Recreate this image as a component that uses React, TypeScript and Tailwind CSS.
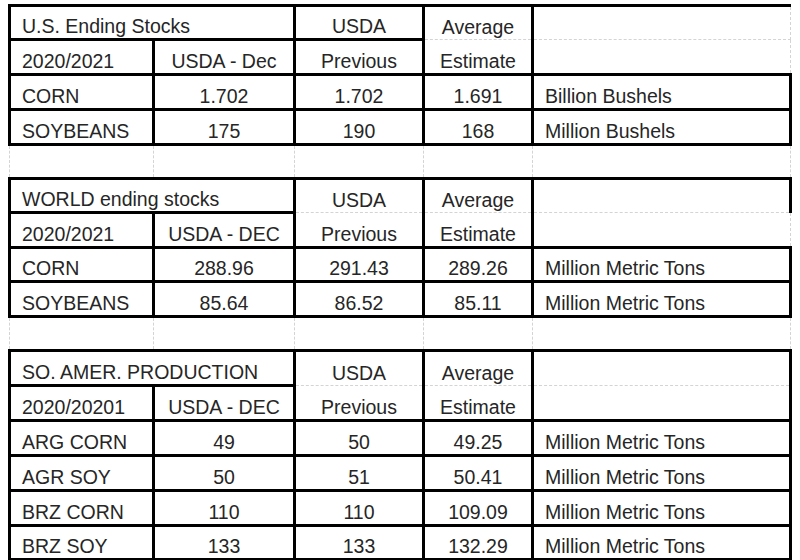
import React from 'react';

// thick black rule on one side of a cell; everything else stays a dashed sheet gridline
const SIDE: Record<string, string> = {
  t: 'border-t-[3px] border-t-black [border-top-style:solid]!',
  r: 'border-r-[3px] border-r-black [border-right-style:solid]!',
  b: 'border-b-[3px] border-b-black [border-bottom-style:solid]!',
  l: 'border-l-[3px] border-l-black [border-left-style:solid]!',
};

type Cell = { text?: string; span?: number; left?: boolean; sides?: string };
type Row = { h: string; cells: Cell[] };

const gap = (h: string): Row => ({ h, cells: [{}, {}, {}, {}, {}] });

const dataRow = (h: string, label: string, a: string, b: string, c: string, unit: string): Row => ({
  h,
  cells: [
    { text: label, left: true, sides: 'lrb' },
    { text: a, sides: 'rb' },
    { text: b, sides: 'rb' },
    { text: c, sides: 'rb' },
    { text: unit, left: true, sides: 'rb' },
  ],
});

const rows: Row[] = [
  {
    h: 'h-[34px]',
    cells: [
      { text: 'U.S. Ending Stocks', span: 2, left: true, sides: 'tlb' },
      { text: 'USDA', sides: 'tlrb' },
      { text: 'Average', sides: 'tr' },
      { sides: 't' },
    ],
  },
  {
    h: 'h-[35px]',
    cells: [
      { text: '2020/2021', left: true, sides: 'lrb' },
      { text: 'USDA - Dec', sides: 'rb' },
      { text: 'Previous', sides: 'rb' },
      { text: 'Estimate', sides: 'rb' },
      { sides: 'b' },
    ],
  },
  dataRow('h-[35px]', 'CORN', '1.702', '1.702', '1.691', 'Billion Bushels'),
  dataRow('h-[35px]', 'SOYBEANS', '175', '190', '168', 'Million Bushels'),
  gap('h-[34px]'),
  {
    h: 'h-[34px]',
    cells: [
      { text: 'WORLD ending stocks', span: 2, left: true, sides: 'tlb' },
      { text: 'USDA', sides: 'tlr' },
      { text: 'Average', sides: 'tr' },
      { sides: 'tr' },
    ],
  },
  {
    h: 'h-[35px]',
    cells: [
      { text: '2020/2021', left: true, sides: 'lrb' },
      { text: 'USDA - DEC', sides: 'rb' },
      { text: 'Previous', sides: 'rb' },
      { text: 'Estimate', sides: 'rb' },
      { sides: 'b' },
    ],
  },
  dataRow('h-[34px]', 'CORN', '288.96', '291.43', '289.26', 'Million Metric Tons'),
  dataRow('h-[35px]', 'SOYBEANS', '85.64', '86.52', '85.11', 'Million Metric Tons'),
  gap('h-[34px]'),
  {
    h: 'h-[35px]',
    cells: [
      { text: 'SO. AMER. PRODUCTION', span: 2, left: true, sides: 'tlb' },
      { text: 'USDA', sides: 'tlr' },
      { text: 'Average', sides: 'tr' },
      { sides: 'tr' },
    ],
  },
  {
    h: 'h-[35px]',
    cells: [
      { text: '2020/20201', left: true, sides: 'lrb' },
      { text: 'USDA - DEC', sides: 'rb' },
      { text: 'Previous', sides: 'rb' },
      { text: 'Estimate', sides: 'rb' },
      { sides: 'rb' },
    ],
  },
  dataRow('h-[35px]', 'ARG CORN', '49', '50', '49.25', 'Million Metric Tons'),
  dataRow('h-[35px]', 'AGR SOY', '50', '51', '50.41', 'Million Metric Tons'),
  dataRow('h-[35px]', 'BRZ CORN', '110', '110', '109.09', 'Million Metric Tons'),
  dataRow('h-[34px]', 'BRZ SOY', '133', '133', '132.29', 'Million Metric Tons'),
];

const sideClasses = (sides = '') =>
  sides
    .split('')
    .map((s) => SIDE[s])
    .join(' ');

export default function App() {
  return (
    <div className="h-[560px] w-[800px] overflow-hidden bg-white pl-[8px] pt-[4px]">
      <table
        className="table-fixed border-collapse text-[19.5px] leading-[22px] text-[#262626] [font-family:'Liberation_Sans',Arial,sans-serif]"
      >
        <colgroup>
          <col className="w-[144px]" />
          <col className="w-[141px]" />
          <col className="w-[129px]" />
          <col className="w-[109px]" />
          <col className="w-[258px]" />
        </colgroup>
        <tbody>
          {rows.map((row, i) => (
            <tr key={i} className={row.h}>
              {row.cells.map((cell, j) => (
                <td
                  key={j}
                  colSpan={cell.span}
                  className={`whitespace-nowrap border border-dashed border-[#d4d4d4] p-0 pb-[1px] align-bottom ${
                    cell.left ? 'pl-[11px] text-left' : 'text-center'
                  } ${sideClasses(cell.sides)}`}
                >
                  {cell.text}
                </td>
              ))}
            </tr>
          ))}
        </tbody>
      </table>
    </div>
  );
}
